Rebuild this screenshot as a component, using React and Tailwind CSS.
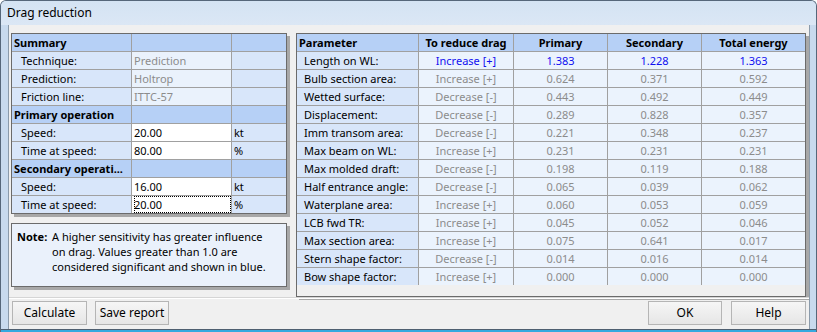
import React from 'react'

const FONT = { fontFamily: '"Noto Sans", "Liberation Sans", sans-serif' }

const summaryRows = [
  { type: 'head', label: 'Summary' },
  { label: 'Technique:', value: 'Prediction' },
  { label: 'Prediction:', value: 'Holtrop' },
  { label: 'Friction line:', value: 'ITTC-57' },
  { type: 'head', label: 'Primary operation' },
  { label: 'Speed:', value: '20.00', unit: 'kt', edit: true },
  { label: 'Time at speed:', value: '80.00', unit: '%', edit: true },
  { type: 'head', label: 'Secondary operati...' },
  { label: 'Speed:', value: '16.00', unit: 'kt', edit: true },
  { label: 'Time at speed:', value: '20.00', unit: '%', edit: true, focus: true },
]

const params = [
  ['Length on WL:', 'Increase [+]', '1.383', '1.228', '1.363', true],
  ['Bulb section area:', 'Increase [+]', '0.624', '0.371', '0.592'],
  ['Wetted surface:', 'Decrease [-]', '0.443', '0.492', '0.449'],
  ['Displacement:', 'Decrease [-]', '0.289', '0.828', '0.357'],
  ['Imm transom area:', 'Decrease [-]', '0.221', '0.348', '0.237'],
  ['Max beam on WL:', 'Increase [+]', '0.231', '0.231', '0.231'],
  ['Max molded draft:', 'Decrease [-]', '0.198', '0.119', '0.188'],
  ['Half entrance angle:', 'Decrease [-]', '0.065', '0.039', '0.062'],
  ['Waterplane area:', 'Increase [+]', '0.060', '0.053', '0.059'],
  ['LCB fwd TR:', 'Increase [+]', '0.045', '0.052', '0.046'],
  ['Max section area:', 'Increase [+]', '0.075', '0.641', '0.017'],
  ['Stern shape factor:', 'Decrease [-]', '0.014', '0.016', '0.014'],
  ['Bow shape factor:', 'Increase [+]', '0.000', '0.000', '0.000'],
]

const Button = ({ children, w }) => (
  <button
    className={`${w} h-[24px] border border-[#b5b5b5] bg-gradient-to-b from-[#f6f6f6] to-[#e6e6e6] text-[12px] text-black leading-none`}
  >
    {children}
  </button>
)

const SummaryGrid = () => (
  <div className="w-[276px] border border-[#6b6b6b] shadow-[3px_3px_0_#a8a8a8] bg-white">
    {summaryRows.map((r, i) => {
      const last = i === summaryRows.length - 1
      const rowCls = `flex ${last ? 'h-[17px]' : 'h-[18px] border-b border-[#a0a0a0]'}`
      if (r.type === 'head') {
        return (
          <div key={i} className={`${rowCls} bg-[#b6d0f6]`}>
            <div className="w-[120px] border-r border-[#a0a0a0] pl-[2px] font-bold whitespace-nowrap overflow-hidden leading-[17px]">{r.label}</div>
            <div className="w-[100px] border-r border-[#a0a0a0]" />
            <div className="flex-1" />
          </div>
        )
      }
      return (
        <div key={i} className={rowCls}>
          <div className="w-[120px] border-r border-[#a0a0a0] bg-[#d8e6fa] pl-[9px] leading-[17px] whitespace-nowrap">{r.label}</div>
          <div
            className={`w-[100px] border-r border-[#a0a0a0] pl-[2px] leading-[17px] ${
              r.edit ? 'bg-white text-black' : 'bg-[#eaf2fc] text-[#8c8c8c]'
            }`}
          >
            <div className={`h-full ${r.focus ? 'outline-1 outline-dotted outline-black -outline-offset-1' : ''}`}>{r.value}</div>
          </div>
          <div className="flex-1 bg-[#d8e6fa] pl-[2px] leading-[17px]">{r.unit}</div>
        </div>
      )
    })}
  </div>
)

const ParamGrid = () => (
  <div className="w-[510px] border border-[#6b6b6b] shadow-[3px_3px_0_#a8a8a8]">
    <div className="flex h-[18px] border-b border-[#a0a0a0] bg-[#b6d0f6] font-bold leading-[17px]">
      <div className="w-[122px] border-r border-[#a0a0a0] pl-[2px]">Parameter</div>
      <div className="w-[95px] border-r border-[#a0a0a0] text-center">To reduce drag</div>
      <div className="w-[94px] border-r border-[#a0a0a0] text-center">Primary</div>
      <div className="w-[94px] border-r border-[#a0a0a0] text-center">Secondary</div>
      <div className="flex-1 text-center">Total energy</div>
    </div>
    {params.map((p, i) => {
      const last = i === params.length - 1
      const tone = p[5] ? 'text-[#1010f0]' : 'text-[#8c8c8c]'
      return (
        <div key={i} className={`flex leading-[17px] ${last ? 'h-[17px]' : 'h-[18px] border-b border-[#a0a0a0]'}`}>
          <div className="w-[122px] border-r border-[#a0a0a0] bg-[#d8e6fa] pl-[7px] whitespace-nowrap">{p[0]}</div>
          <div className={`w-[95px] border-r border-[#a0a0a0] bg-[#ebf3fd] text-center ${tone}`}>{p[1]}</div>
          <div className={`w-[94px] border-r border-[#a0a0a0] bg-[#ebf3fd] text-center ${tone}`}>{p[2]}</div>
          <div className={`w-[94px] border-r border-[#a0a0a0] bg-[#ebf3fd] text-center ${tone}`}>{p[3]}</div>
          <div className={`flex-1 bg-[#ebf3fd] text-center ${tone}`}>{p[4]}</div>
        </div>
      )
    })}
  </div>
)

export default function App() {
  return (
    <div style={FONT} className="w-[817px] h-[332px] flex flex-col bg-[#c8daee] border border-b-0 border-[#56677a] rounded-t-[6px] overflow-hidden text-[11px] text-black">
      {/* title bar */}
      <div className="h-[24px] flex items-center pl-[6px] bg-gradient-to-b from-[#d4e3f3] to-[#dbe7f5] text-[12px]">
        Drag reduction
      </div>

      <div className="flex flex-1 px-[7px] pr-[6px]">
        <div className="flex-1 flex flex-col bg-[#f0f0f0] border-x border-[#8b9bab]">
          <div className="flex gap-[9px] pl-[2px] pt-[8px] h-[272px]">
            <div className="flex flex-col gap-[9px]">
              <SummaryGrid />
              <div className="w-[276px] h-[64px] border border-[#6b6b6b] shadow-[3px_3px_0_#a8a8a8] bg-[#eaf1fb] flex pl-[5px] pt-[5px] leading-[15px]">
                <div className="w-[35px] font-bold">Note:</div>
                <div className="w-[225px]">
                  A higher sensitivity has greater influence on drag. Values greater than 1.0 are considered significant and shown in blue.
                </div>
              </div>
            </div>
            <ParamGrid />
          </div>

          <div className="border-t border-[#d5d5d5]" />
          <div className="border-t border-white" />

          <div className="flex items-start pt-[2px] px-[3px]">
            <div className="flex gap-[8px]">
              <Button w="w-[75px]">Calculate</Button>
              <Button w="w-[74px]">Save report</Button>
            </div>
            <div className="ml-auto flex gap-[9px]">
              <Button w="w-[74px]">OK</Button>
              <Button w="w-[75px]">Help</Button>
            </div>
          </div>
        </div>
      </div>
      <div className="h-[3px] border-t border-[#4f5f70] bg-[#35a9df]" />
    </div>
  )
}
